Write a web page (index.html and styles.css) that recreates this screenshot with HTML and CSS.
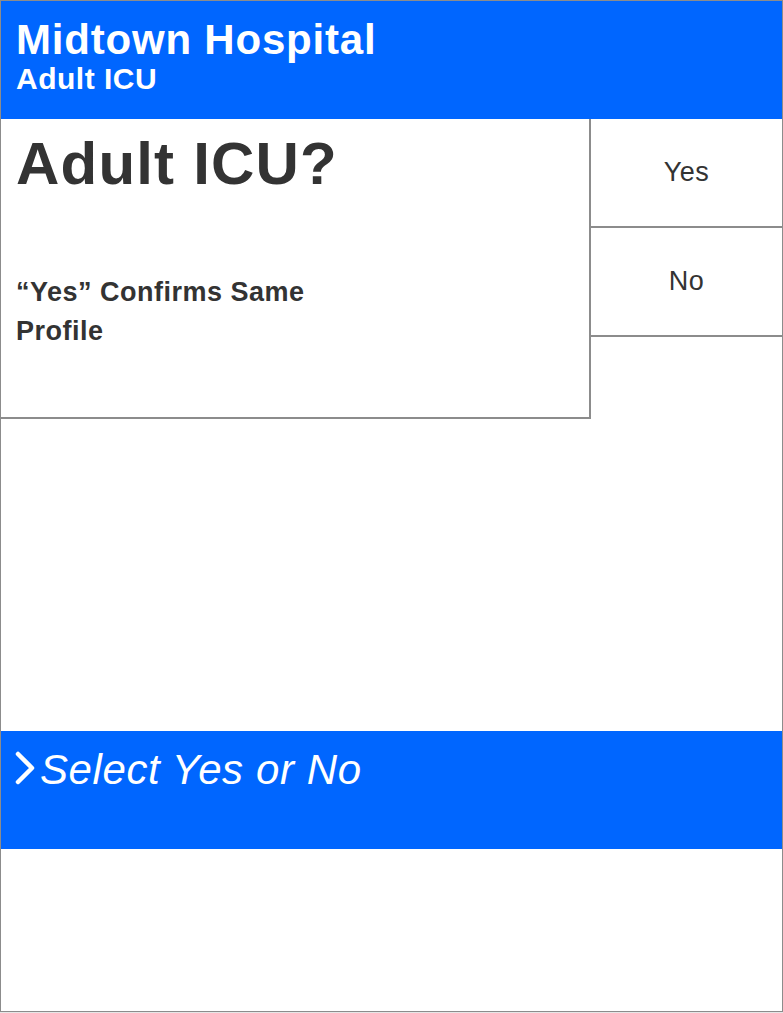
FILE: index.html
```html
<!DOCTYPE html>
<html>

<head>
    <meta charset="utf-8" />
    <title>Midtown Hospital - Adult ICU</title>
    <link rel="stylesheet" href="styles.css">
</head>

<body>
    <div class="screen">
        <div class="header">
            <div class="hospital">Midtown Hospital</div>
            <div class="unit">Adult ICU</div>
        </div>

        <div class="main">
            <div class="question">
                <h1 class="questionTitle">Adult ICU?</h1>
                <p class="questionNote">“Yes” Confirms Same Profile</p>
            </div>
            <div class="answers">
                <button class="answerButton">Yes</button>
                <button class="answerButton">No</button>
            </div>
        </div>

        <div class="prompt">
            <svg class="chevron" width="22" height="34" viewBox="0 0 22 34">
                <polyline points="4,3 18,17 4,31" fill="none" stroke="white" stroke-width="4.5" stroke-linecap="round" stroke-linejoin="round" />
            </svg>
            <span class="promptText">Select Yes or No</span>
        </div>
    </div>
</body>

</html>
```

FILE: styles.css
```css
body {
    margin: 0;
    background-color: #e6e6e6;
    font-family: "Liberation Sans", Arial, sans-serif;
}

.screen {
    box-sizing: border-box;
    width: 783px;
    height: 1012px;
    border: 1px solid #8c8c8c;
    background-color: white;
}

.header {
    box-sizing: border-box;
    height: 118px;
    padding: 17px 16px 0 15px;
    background-color: #0066ff;
    color: white;
    font-weight: bold;
}

.hospital {
    font-size: 42px;
    line-height: 44px;
    letter-spacing: 0.8px;
}

.unit {
    margin-top: 1px;
    font-size: 30px;
    line-height: 32px;
    letter-spacing: 0.5px;
}

.main {
    display: flex;
    height: 300px;
}

.question {
    box-sizing: border-box;
    width: 590px;
    padding: 13px 15px 0 15px;
    border-right: 2px solid #8c8c8c;
    border-bottom: 2px solid #8c8c8c;
    color: #333;
}

.questionTitle {
    margin: 0;
    font-size: 60px;
    line-height: 64px;
    letter-spacing: 1.2px;
}

.questionNote {
    margin: 77px 0 0 0;
    max-width: 330px;
    font-size: 27px;
    font-weight: bold;
    line-height: 39px;
    letter-spacing: 0.5px;
}

.answers {
    display: flex;
    flex-direction: column;
    flex: 1;
}

.answerButton {
    height: 109px;
    padding: 0;
    border: none;
    border-bottom: 2px solid #8c8c8c;
    background-color: white;
    color: #333;
    font-family: "Liberation Sans", Arial, sans-serif;
    font-size: 27px;
    letter-spacing: 0.5px;
    cursor: pointer;
}

.prompt {
    box-sizing: border-box;
    display: flex;
    align-items: flex-start;
    gap: 4px;
    height: 118px;
    margin-top: 312px;
    padding: 15px 16px 0 13px;
    background-color: #0066ff;
    color: white;
}

.chevron {
    margin-top: 5px;
}

.promptText {
    font-size: 42px;
    font-style: italic;
    line-height: 48px;
    letter-spacing: 0.6px;
}
```
